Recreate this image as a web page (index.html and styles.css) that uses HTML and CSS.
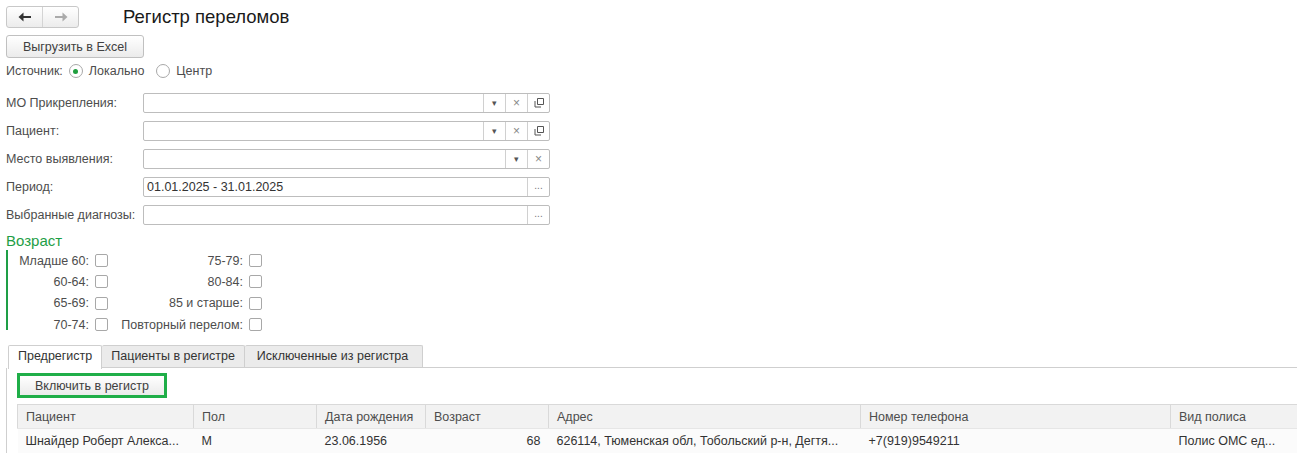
FILE: index.html
```html
<!DOCTYPE html>
<html lang="ru">
<head>
    <meta charset="UTF-8">
    <title>Регистр переломов</title>
    <link rel="stylesheet" href="styles.css">
</head>
<body>
    <!-- Header -->
    <div class="head">
        <div class="nav-group">
            <span class="nav-btn"><svg width="14" height="10" viewBox="0 0 14 10"><path d="M3 5h10" stroke="#333" stroke-width="2"/><path d="M0.5 5l5-4.5v9z" fill="#333"/></svg></span>
            <span class="nav-btn"><svg width="14" height="10" viewBox="0 0 14 10"><path d="M1 5h10" stroke="#aaa" stroke-width="2"/><path d="M13.5 5l-5-4.5v9z" fill="#aaa"/></svg></span>
        </div>
        <h1>Регистр переломов</h1>
    </div>

    <button class="btn excel">Выгрузить в Excel</button>

    <div class="source">
        <span>Источник:</span>
        <label class="radio"><span class="dot on"></span>Локально</label>
        <label class="radio"><span class="dot"></span>Центр</label>
    </div>

    <!-- Filters -->
    <div class="filters">
        <label>МО Прикрепления:</label>
        <div class="field"><span class="val"></span><span class="fb">&#9662;</span><span class="fb x">×</span><span class="fb"><svg width="10" height="10" viewBox="0 0 10 10"><path d="M3.5 0.5h6v6h-6zM1 3v6h6" stroke="#555" fill="none"/></svg></span></div>

        <label>Пациент:</label>
        <div class="field"><span class="val"></span><span class="fb">&#9662;</span><span class="fb x">×</span><span class="fb"><svg width="10" height="10" viewBox="0 0 10 10"><path d="M3.5 0.5h6v6h-6zM1 3v6h6" stroke="#555" fill="none"/></svg></span></div>

        <label>Место выявления:</label>
        <div class="field"><span class="val"></span><span class="fb">&#9662;</span><span class="fb x">×</span></div>

        <label>Период:</label>
        <div class="field"><span class="val">01.01.2025 - 31.01.2025</span><span class="fb dots">...</span></div>

        <label>Выбранные диагнозы:</label>
        <div class="field"><span class="val"></span><span class="fb dots">...</span></div>
    </div>

    <!-- Age group -->
    <div class="group-title">Возраст</div>
    <div class="age">
        <span class="l1">Младше 60:</span><span class="cb"></span><span class="l2">75-79:</span><span class="cb"></span>
        <span class="l1">60-64:</span><span class="cb"></span><span class="l2">80-84:</span><span class="cb"></span>
        <span class="l1">65-69:</span><span class="cb"></span><span class="l2">85 и старше:</span><span class="cb"></span>
        <span class="l1">70-74:</span><span class="cb"></span><span class="l2">Повторный перелом:</span><span class="cb"></span>
    </div>

    <!-- Tabs -->
    <div class="tabs">
        <span class="tab active">Предрегистр</span>
        <span class="tab">Пациенты в регистре</span>
        <span class="tab wide">Исключенные из регистра</span>
    </div>
    <div class="panel">
        <div class="hl"><button class="btn inc">Включить в регистр</button></div>
        <table>
            <colgroup>
                <col style="width:176px"><col style="width:123px"><col style="width:109px"><col style="width:123px"><col style="width:312px"><col style="width:310px"><col>
            </colgroup>
            <thead>
                <tr><th>Пациент</th><th>Пол</th><th>Дата рождения</th><th>Возраст</th><th>Адрес</th><th>Номер телефона</th><th>Вид полиса</th></tr>
            </thead>
            <tbody>
                <tr><td>Шнайдер Роберт Алекса...</td><td>М</td><td>23.06.1956</td><td class="num">68</td><td>626114, Тюменская обл, Тобольский р-н, Дегтя...</td><td>+7(919)9549211</td><td>Полис ОМС ед...</td></tr>
            </tbody>
        </table>
    </div>
</body>
</html>
```

FILE: styles.css
```css
body {
    font-family: "Liberation Sans", Arial, sans-serif;
    font-size: 12.5px;
    color: #4d4d4d;
    background: #fff;
    margin: 0;
    padding: 6px 0 0 6px;
    overflow: hidden;
}

.head {
    display: flex;
    align-items: center;
    height: 22px;
}

.nav-group {
    display: flex;
    width: 71px;
    height: 20px;
    border: 1px solid #c8c8c8;
    border-radius: 3px;
    background: linear-gradient(#fff, #ececec);
}

.nav-btn {
    flex: 1;
    display: flex;
    align-items: center;
    justify-content: center;
}

.nav-btn + .nav-btn {
    border-left: 1px solid #d4d4d4;
}

h1 {
    margin: 0 0 0 44px;
    font-size: 18.5px;
    font-weight: normal;
    color: #1a1a1a;
}

.btn {
    font-family: inherit;
    font-size: 12.5px;
    color: #404040;
    background: linear-gradient(#fff, #ebebeb);
    border: 1px solid #c0c0c0;
    border-radius: 3px;
    padding: 0 13px;
    height: 23px;
}

.excel {
    display: block;
    margin-top: 7px;
    width: 138px;
}

.source {
    display: flex;
    align-items: center;
    height: 16px;
    margin-top: 5px;
    gap: 6px;
}

.radio {
    display: flex;
    align-items: center;
    gap: 6px;
    margin-right: 6px;
}

.dot {
    width: 14px;
    height: 14px;
    border: 1px solid #a8a8a8;
    border-radius: 50%;
    box-sizing: border-box;
    display: flex;
    align-items: center;
    justify-content: center;
}

.dot.on::after {
    content: "";
    width: 5px;
    height: 5px;
    border-radius: 50%;
    background: #1f9e3e;
}

.filters {
    display: grid;
    grid-template-columns: 137px 407px;
    grid-auto-rows: 20px;
    row-gap: 8px;
    margin-top: 14px;
    align-items: center;
}

.field {
    display: flex;
    height: 20px;
    box-sizing: border-box;
    border: 1px solid #bdbdbd;
    border-radius: 2px;
}

.val {
    flex: 1;
    padding-left: 3px;
    line-height: 18px;
    color: #333;
}

.fb {
    width: 21px;
    border-left: 1px solid #d0d0d0;
    display: flex;
    align-items: center;
    justify-content: center;
    font-size: 9px;
    color: #555;
}

.fb.x {
    font-size: 12px;
    color: #888;
}

.fb.dots {
    font-size: 10px;
    color: #777;
    align-items: flex-start;
    line-height: 16px;
}

.group-title {
    color: #1e9e46;
    font-size: 15px;
    margin-top: 7px;
    height: 17px;
}

.age {
    display: grid;
    grid-template-columns: 81px 13px 129px 13px;
    grid-auto-rows: 21.3px;
    column-gap: 6px;
    align-items: center;
    width: 280px;
    height: 80px;
    box-sizing: border-box;
    padding-top: 0;
    border-left: 2px solid #1e9e46;
    margin-top: 1px;
}

.l1, .l2 {
    text-align: right;
    white-space: nowrap;
}

.cb {
    width: 13px;
    height: 13px;
    box-sizing: border-box;
    border: 1px solid #a8a8a8;
    border-radius: 2px;
}

.tabs {
    display: flex;
    margin-top: 15px;
    margin-left: 2px;
    height: 22px;
    border-bottom: 1px solid #cfcfcf;
}

.tab {
    padding: 0 9px;
    line-height: 21px;
    color: #333;
    background: #ebebeb;
    border: 1px solid #cfcfcf;
    border-left: none;
    border-bottom: none;
    border-radius: 2px 2px 0 0;
}

.tab.wide {
    padding: 0 14px 0 12px;
}

.tab.active {
    background: #fff;
    border-left: 1px solid #cfcfcf;
    height: 23px;
}

.panel {
    border-left: 1px solid #cfcfcf;
    padding: 5px 0 0 10px;
    height: 90px;
}

.hl {
    display: inline-block;
    border: 3px solid #1fae48;
}

.inc {
    display: block;
    width: 144px;
    height: 19px;
    border-radius: 1px;
    border: none;
    padding: 0;
}

table {
    margin-top: 6px;
    border-collapse: collapse;
    table-layout: fixed;
    width: 1281px;
}

th {
    text-align: left;
    font-weight: normal;
    color: #4d4d4d;
    background: #f2f2f2;
    border: 1px solid #d9d9d9;
    border-bottom: 1px solid #e6e6e6;
    height: 23px;
    padding: 0 8px;
}

td {
    height: 24px;
    padding: 0 8px;
    color: #333;
    background: #fbfbfb;
    white-space: nowrap;
    overflow: hidden;
}

td.num {
    text-align: right;
}
```
